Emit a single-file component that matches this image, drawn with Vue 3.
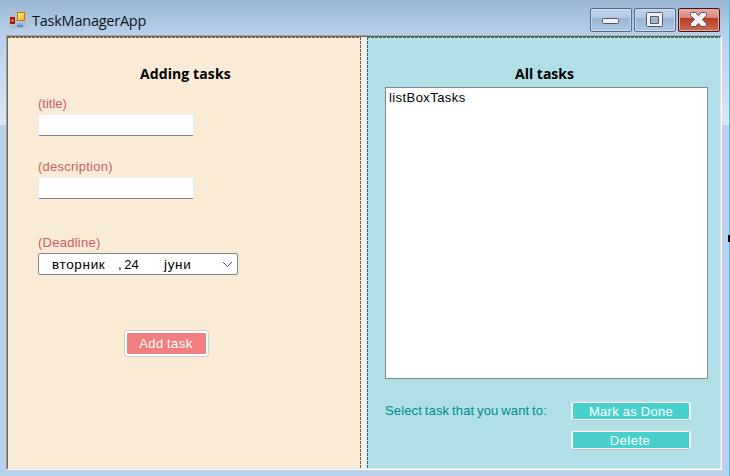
<script setup>
import { ref } from 'vue'

const title = ref('')
const description = ref('')
const tasks = ['listBoxTasks']
</script>

<template>
  <div class="window">
    <header class="titlebar">
      <svg class="app-icon" width="18" height="18" viewBox="0 0 18 18">
        <defs>
          <linearGradient id="gold" x1="0" y1="0" x2="1" y2="1">
            <stop offset="0" stop-color="#fff0a0" /><stop offset="1" stop-color="#f2b311" />
          </linearGradient>
          <linearGradient id="blue" x1="0" y1="0" x2="0" y2="1">
            <stop offset="0" stop-color="#a9cdfb" /><stop offset="1" stop-color="#3f7de0" />
          </linearGradient>
        </defs>
        <rect width="18" height="18" fill="#b9bfc8" />
        <path d="M1 1h5v4H1zM1 14h6v3H1z" fill="#a9bcd3" />
        <rect x="1" y="6" width="5" height="7" fill="#a8160b" />
        <rect x="2" y="8" width="3" height="3" fill="#d3452f" />
        <rect x="3" y="9" width="1" height="1" fill="#ffd0c0" />
        <rect x="8.500" y="1.500" width="7" height="8" fill="url(#gold)" stroke="#b47a08" />
        <rect x="8" y="11" width="6" height="5" fill="url(#blue)" />
      </svg>
      <span class="caption">TaskManagerApp</span>
      <div class="controls">
        <button class="control" aria-label="Minimize">
          <svg width="40" height="22" viewBox="0 0 40 22">
            <rect x="11.500" y="9.500" width="16" height="5" rx="1" fill="#f3f3f3" stroke="#50586b" />
          </svg>
        </button>
        <button class="control" aria-label="Maximize">
          <svg width="40" height="22" viewBox="0 0 40 22">
            <path fill-rule="evenodd" d="M12.500 3.500h14q1 0 1 1v12q0 1-1 1h-14q-1 0-1-1v-12q0-1 1-1zM15.500 7.500v7h8v-7z" fill="#f0f0f1" stroke="#50586b" />
          </svg>
        </button>
        <button class="control close" aria-label="Close">
          <svg width="40" height="22" viewBox="0 0 40 22">
            <path d="M12.500 3.500h4l3 3 3-3h4l1 1v2l-4 4 4 4v2l-1 1h-4l-3-3-3 3h-4l-1-1v-2l4-4-4-4v-2z" fill="#f2f1f2" stroke="#54515e" />
          </svg>
        </button>
      </div>
    </header>

    <main class="client">
      <section class="panel adding">
        <h2>Adding tasks</h2>
        <label class="title-label">(title)</label>
        <input v-model="title" class="field" type="text" />
        <label class="description-label">(description)</label>
        <input v-model="description" class="field" type="text" />
        <label class="deadline-label">(Deadline)</label>
        <div class="date">
          <span class="weekday">вторник</span>
          <span class="day">, 24</span>
          <span class="month">јуни</span>
          <svg class="chevron" width="11" height="7" viewBox="0 0 11 7">
            <path d="M1 1l4.500 4.500L10 1" fill="none" stroke="#555" />
          </svg>
        </div>
        <button class="add">Add task</button>
      </section>

      <section class="panel all">
        <h2>All tasks</h2>
        <ul class="list">
          <li v-for="task in tasks" :key="task">{{ task }}</li>
        </ul>
        <div class="actions">
          <span class="hint">Select task that you want to:</span>
          <div class="buttons">
            <button class="mark">Mark as Done</button>
            <button class="delete">Delete</button>
          </div>
        </div>
      </section>
    </main>
  </div>
</template>

<style>
body {
  margin: 0;
  overflow: hidden;
}
</style>

<style scoped>
* {
  box-sizing: border-box;
}

.window {
  width: 730px;
  height: 476px;
  padding: 0 7px 6px 6px;
  display: flex;
  flex-direction: column;
  border-right: 1px solid #43bfe9;
  background:
    linear-gradient(#9bb6d3, #b9d0eb) 0 0 / 100% 35px no-repeat,
    linear-gradient(#b9d0ea, #dae7f5) 0 35px / 100% 90px no-repeat,
    #b9d1ea;
  font-family: "Liberation Sans", Arial, sans-serif;
  font-size: 13px;
}

.window::after {
  content: "";
  position: absolute;
  left: 728px;
  top: 235px;
  width: 2px;
  height: 7px;
  background: #000;
}

.titlebar {
  height: 35px;
  flex: none;
  display: flex;
  align-items: flex-start;
  padding: 8px 2px 0 3px;
}

.app-icon {
  margin-top: 3px;
}

.caption {
  margin: 2px 0 0 5px;
  font: 14.500px/21px "Open Sans", "Noto Sans", sans-serif;
  letter-spacing: -0.240px;
  color: #101418;
}

.controls {
  margin-left: auto;
  display: flex;
  gap: 2px;
}

.control {
  width: 42px;
  height: 24px;
  padding: 0;
  border: 1px solid #586a89;
  border-radius: 2px;
  background: linear-gradient(#c0d3e9 0, #b3cae4 9px, #98b3d1 9px, #adc7e2 100%);
  box-shadow: inset 0 0 0 1px #cbdbee;
}

.control svg {
  display: block;
}

.close {
  border-color: #431522;
  background: linear-gradient(#e8aaa0 0, #d98579 9px, #b83b24 9px, #cc6c50 100%);
  box-shadow: inset 0 0 0 1px #e9a89c;
}

.client {
  width: 716px;
  height: 435px;
  flex: none;
  display: flex;
  justify-content: space-between;
  background: #f0f0f0;
  border: 1px solid;
  border-color: #a0a0a0 #fff #fff #a0a0a0;
  box-shadow: inset 1px 1px #696969, inset -1px -1px #e3e3e3;
  padding: 1px;
}

.panel {
  display: flex;
  flex-direction: column;
  height: 431px;
}

.adding {
  width: 353px;
  padding: 28px 0 0 30px;
  background:
    repeating-linear-gradient(90deg, #8b5a1a 0 3px, #fff 3px 4px) 0 0 / 100% 1px no-repeat,
    repeating-linear-gradient(#8b5a1a 0 3px, #faebd7 3px 4px) 100% 0 / 1px 100% no-repeat,
    #faebd7;
}

.all {
  width: 353px;
  padding: 28px 0 0 18px;
  background:
    repeating-linear-gradient(90deg, #2c6268 0 3px, #d5f0f2 3px 4px) 0 0 / 100% 1px no-repeat,
    repeating-linear-gradient(#2c6268 0 3px, #b0e0e6 3px 4px) 0 0 / 1px 100% no-repeat,
    #b0e0e6;
}

h2 {
  margin: 0;
  font: 700 14px/18px "Open Sans", "Noto Sans", sans-serif;
  letter-spacing: 0.100px;
  color: #000;
}

.adding h2 {
  margin-left: 102px;
}

.all h2 {
  margin-left: 130px;
  letter-spacing: 0;
}

label {
  line-height: 16px;
  letter-spacing: 0.250px;
  color: #cd5c5c;
}

.title-label {
  margin-top: 13px;
  letter-spacing: 0;
}

.description-label {
  margin-top: 23px;
}

.deadline-label {
  margin-top: 36px;
}

.field {
  width: 156px;
  height: 22px;
  margin-top: 2px;
  padding: 2px 4px;
  border: 1px solid #ececec;
  border-bottom-color: #858585;
  border-radius: 2px;
  outline: 0;
  background: #fff;
  font: inherit;
}

.date {
  width: 200px;
  height: 22px;
  margin-top: 2px;
  padding: 0 4px 0 13px;
  display: flex;
  align-items: center;
  border: 1px solid #858585;
  border-radius: 2px;
  background: #fff;
  color: #000;
  font-size: 13.500px;
  letter-spacing: 0.650px;
}

.weekday {
  width: 66px;
}

.day {
  width: 46px;
  font-size: 13px;
  letter-spacing: 0;
  word-spacing: -1px;
}

.chevron {
  margin-left: auto;
}

.add,
.mark,
.delete {
  padding: 0;
  font: 13px/16px "Liberation Sans", Arial, sans-serif;
  color: #fff;
}

.add {
  width: 83px;
  height: 25px;
  margin: 56px 0 0 87px;
  padding-right: 1px;
  border: 2px solid #fff;
  border-radius: 3px;
  background: #f08080;
  box-shadow: 0 0 0 1px #cfcfcf;
  letter-spacing: 0.500px;
  word-spacing: -1px;
}

.list {
  width: 323px;
  height: 292px;
  flex: none;
  margin: 4px 0 0;
  padding: 2px 3px;
  border: 1px solid #828790;
  background: #fff;
  list-style: none;
  line-height: 16px;
  letter-spacing: 0.420px;
  color: #000;
}

.actions {
  display: flex;
  width: 306px;
  justify-content: space-between;
  padding-top: 22px;
}

.hint {
  margin-top: 1px;
  line-height: 17px;
  letter-spacing: 0.150px;
  word-spacing: -1px;
  color: #008b8b;
}

.buttons {
  display: flex;
  flex-direction: column;
  gap: 9px;
}

.mark,
.delete {
  width: 120px;
  height: 20px;
  padding-top: 1px;
  border: 1px solid;
  border-color: #d9dcdc #eef1f1 #bcc0c0;
  border-radius: 3px;
  background: #48d1cc;
  box-shadow: inset 0 0 0 1px #fff;
  letter-spacing: 0.250px;
}

.delete {
  letter-spacing: 0.500px;
  padding-right: 2px;
}
</style>
